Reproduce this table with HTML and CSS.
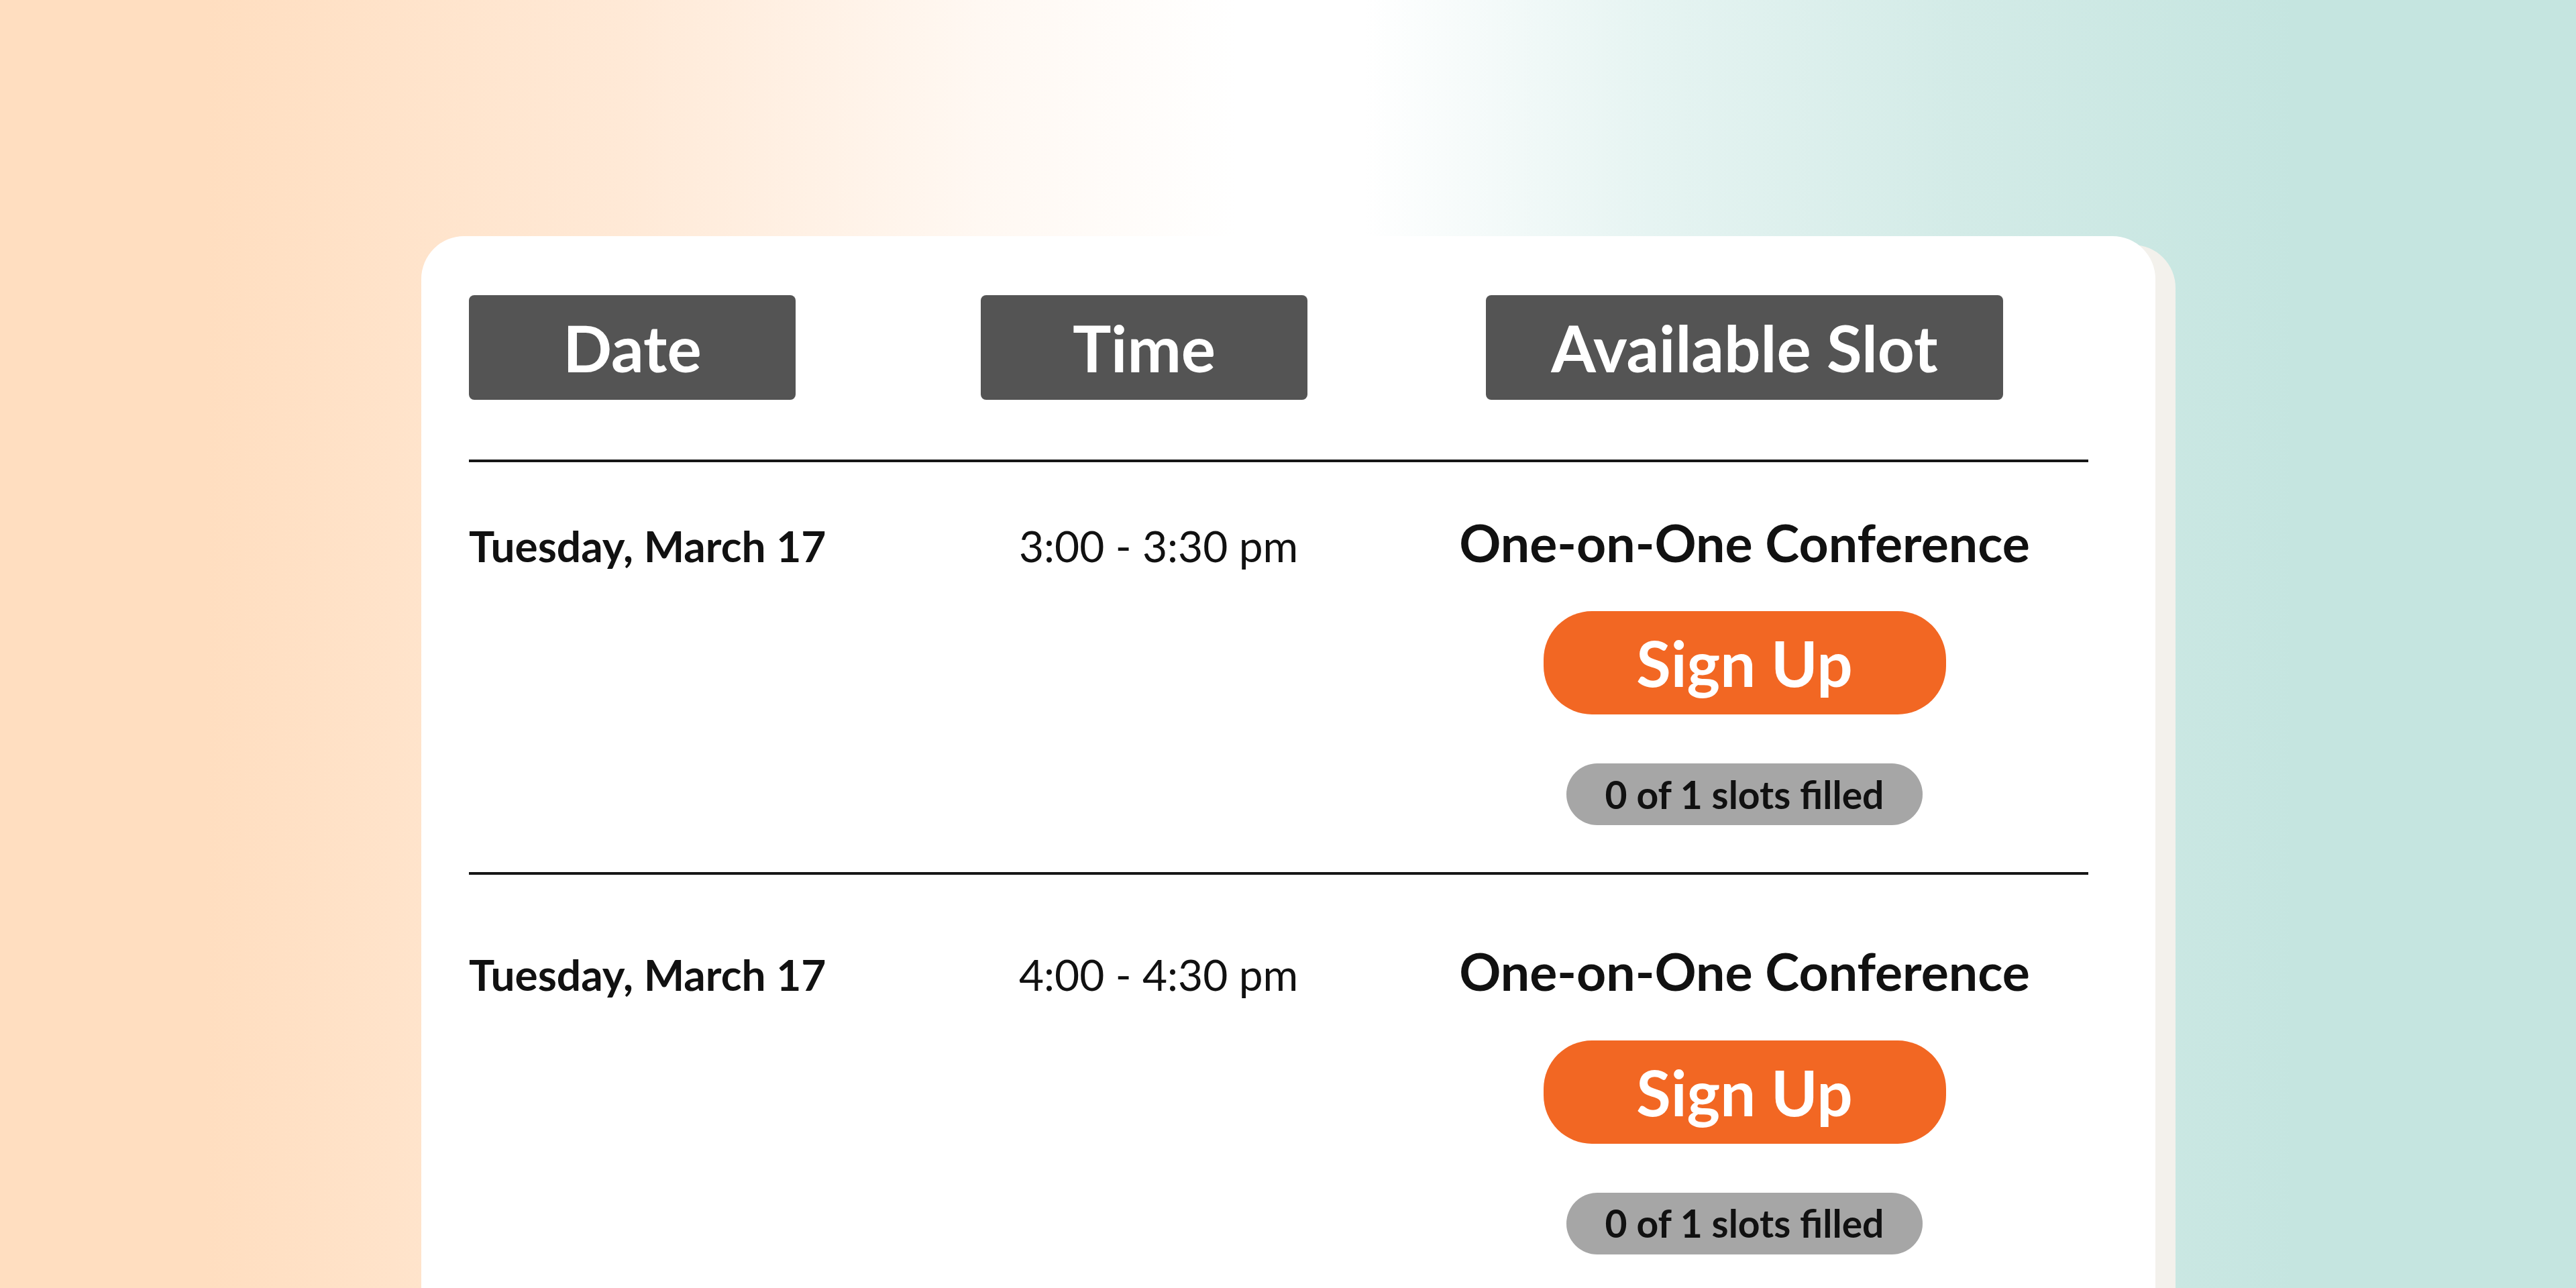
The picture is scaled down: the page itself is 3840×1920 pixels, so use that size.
FILE: index.html
```html
<!DOCTYPE html>
<html lang="en">
<head>
<meta charset="utf-8">
<title>Conference Sign Up</title>
<link rel="stylesheet" href="styles.css">
</head>
<body>
<main class="stage">
  <section class="card">
    <div class="table-head">
      <div class="head-cell"><span class="head-label head-date">Date</span></div>
      <div class="head-cell"><span class="head-label head-time">Time</span></div>
      <div class="head-cell"><span class="head-label head-slot">Available Slot</span></div>
    </div>

    <div class="slot-row">
      <div class="cell-date">Tuesday, March 17</div>
      <div class="cell-time">3:00 - 3:30 pm</div>
      <div class="cell-slot">
        <div class="slot-title">One-on-One Conference</div>
        <button class="signup-btn" type="button">Sign Up</button>
        <div class="slot-count">0 of 1 slots filled</div>
      </div>
    </div>

    <div class="slot-row">
      <div class="cell-date">Tuesday, March 17</div>
      <div class="cell-time">4:00 - 4:30 pm</div>
      <div class="cell-slot">
        <div class="slot-title">One-on-One Conference</div>
        <button class="signup-btn" type="button">Sign Up</button>
        <div class="slot-count">0 of 1 slots filled</div>
      </div>
    </div>
  </section>
</main>
</body>
</html>
```
FILE: styles.css
```css
html, body {
  margin: 0;
  padding: 0;
}

body {
  width: 3840px;
  height: 1920px;
  overflow: hidden;
  font-family: Lato, "Noto Sans", sans-serif;
  color: #111111;
  background: linear-gradient(to right,
    #ffdec0 0%,
    #ffdec0 8%,
    #ffe9d6 24%,
    #fff8f2 38%,
    #ffffff 48%,
    #ffffff 53%,
    #e6f4f2 64%,
    #d3ebe7 76%,
    #c5e5e0 89%,
    #c5e5e0 100%);
}

.stage {
  box-sizing: border-box;
  height: 1920px;
  padding: 352px 0 0 628px;
}

.card {
  box-sizing: border-box;
  width: 2585px;
  height: 1568px;
  overflow: hidden;
  padding: 88px 100px 0 71px;
  background: #ffffff;
  border-radius: 64px 64px 0 0;
  box-shadow: 30px 13px 0 0 #f3f1ec;
}

.table-head,
.slot-row {
  display: grid;
  grid-template-columns: 763px 753px 771px 1fr;
}

.table-head {
  padding-bottom: 89px;
  border-bottom: 4px solid #161616;
}

.head-label {
  display: flex;
  align-items: center;
  justify-content: center;
  height: 156px;
  background: #545454;
  border-radius: 8px;
  color: #ffffff;
  font-size: 96px;
  font-weight: 700;
  line-height: 1;
}

.head-date,
.head-time {
  width: 487px;
}

.head-slot {
  width: 771px;
}

.slot-row {
  align-items: first baseline;
  padding: 73px 0 70px;
  border-bottom: 4px solid #161616;
}

.slot-row + .slot-row {
  padding-top: 97px;
}

.cell-date {
  font-size: 64px;
  font-weight: 700;
  line-height: 1.2;
}

.cell-time {
  padding-left: 57px;
  font-size: 64px;
  font-weight: 400;
  line-height: 1.2;
}

.cell-slot {
  display: flex;
  flex-direction: column;
  align-items: center;
}

.slot-title {
  font-size: 77px;
  font-weight: 700;
  line-height: 1.2;
  white-space: nowrap;
}

.signup-btn {
  margin-top: 57px;
  width: 600px;
  height: 154px;
  border: 0;
  border-radius: 72px;
  background: #f26723;
  color: #ffffff;
  font-family: Lato, "Noto Sans", sans-serif;
  font-size: 94px;
  font-weight: 700;
  line-height: 1;
  padding: 0;
}

.slot-count {
  display: flex;
  align-items: center;
  justify-content: center;
  margin-top: 73px;
  width: 531px;
  height: 92px;
  border-radius: 46px;
  background: #a6a6a6;
  color: #111111;
  font-size: 57px;
  font-weight: 700;
  line-height: 1;
}
```
